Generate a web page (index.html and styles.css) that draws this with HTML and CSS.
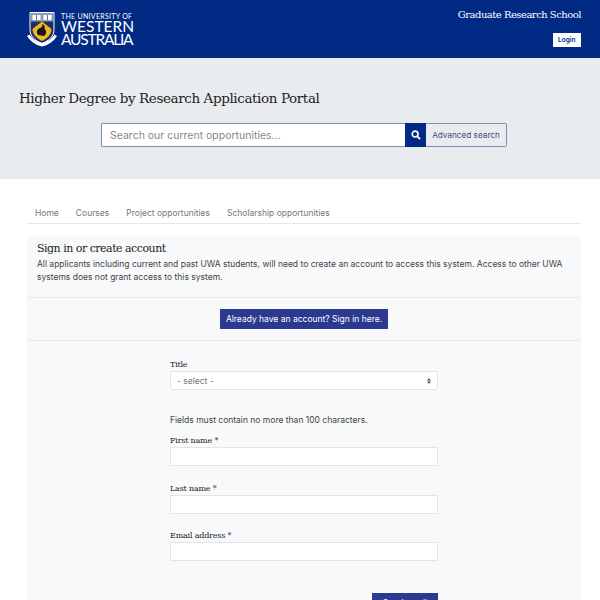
FILE: index.html
```html
<!DOCTYPE html>
<html lang="en">
<head>
  <meta charset="UTF-8">
  <meta name="viewport" content="width=device-width, initial-scale=1.0">
  <title>Higher Degree by Research Application Portal</title>
  <link rel="stylesheet" href="styles.css">
</head>
<body>
  <!-- Header -->
  <div class="topbar">
    <div class="logo">
      <svg class="crest" width="30" height="35" viewBox="0 0 30 35">
        <path d="M3 .5h24v17c0 7-5 11-12 14C8 28.500 3 24.500 3 17.500z" fill="#1c2f66" stroke="#fff" stroke-width="1"/>
        <path d="M3.500 1h23v8.500h-23z" fill="#8f9cb8"/>
        <rect x="5.500" y="3" width="8" height="5" fill="#fff"/>
        <rect x="16.500" y="3" width="8" height="5" fill="#fff"/>
        <path d="M9.500 3v5M20.500 3v5" stroke="#5a6a90" stroke-width="1"/>
        <path d="M15 9.500l9.500 7.500c0 5-3 8.500-9.500 12-6.500-3.500-9.500-7-9.500-12z" fill="#f0b81e"/>
        <path d="M11 23c-2-3-1-6 2-7 2-.5 3-2 2-4 3 1 3 3 2.500 5 2.500 2 2 5.500-.5 7z" fill="#15151a"/>
        <path d="M0 24c3 5 8 9 15 10.500C22 33 27 29 30 24l-2.500-1.500C25 26.500 21 29.500 15 31 9 29.500 5 26.500 2.500 22.500z" fill="#fff"/>
      </svg>
      <div class="wordmark">
        <span class="wordmark-small">THE UNIVERSITY OF</span>
        <span class="wordmark-big">WESTERN</span>
        <span class="wordmark-big wordmark-tight">AUSTRALIA</span>
      </div>
    </div>
    <div class="topbar-right">
      <div class="school">Graduate Research School</div>
      <a class="login" href="#">Login</a>
    </div>
  </div>

  <!-- Search -->
  <div class="hero">
    <h1>Higher Degree by Research Application Portal</h1>
    <div class="search">
      <input class="search-input" type="text" placeholder="Search our current opportunities...">
      <button class="search-btn">
        <svg width="10" height="10" viewBox="0 0 11 11">
          <circle cx="4.500" cy="4.500" r="3.200" fill="none" stroke="#fff" stroke-width="1.800"/>
          <path d="M7 7l3 3" stroke="#fff" stroke-width="2"/>
        </svg>
      </button>
      <a class="advanced" href="#">Advanced search</a>
    </div>
  </div>

  <div class="content">
    <!-- Nav -->
    <div class="nav">
      <a href="#">Home</a>
      <a href="#">Courses</a>
      <a href="#">Project opportunities</a>
      <a href="#">Scholarship opportunities</a>
    </div>

    <!-- Card -->
    <div class="card">
      <div class="card-head">
        <h2>Sign in or create account</h2>
        <p>All applicants including current and past UWA students, will need to create an account to access this system. Access to other UWA systems does not grant access to this system.</p>
      </div>
      <div class="card-signin">
        <a class="btn" href="#">Already have an account? Sign in here.</a>
      </div>
      <div class="card-form">
        <div class="form">
          <label>Title</label>
          <div class="select">
            <span>- select -</span>
            <svg width="4" height="6" viewBox="0 0 5 7">
              <path d="M2.500 0L5 3H0zM2.500 7L0 4h5z" fill="#444"/>
            </svg>
          </div>
          <p class="hint">Fields must contain no more than 100 characters.</p>
          <label>First name *</label>
          <input class="field" type="text">
          <label>Last name *</label>
          <input class="field" type="text">
          <label>Email address *</label>
          <input class="field" type="text">
          <div class="form-actions">
            <a class="btn submit" href="#">Send email</a>
          </div>
        </div>
      </div>
    </div>
  </div>
</body>
</html>
```

FILE: styles.css
```css
/* General Styles */
body {
  font-family: "Inter", "Noto Sans", sans-serif;
  margin: 0;
  background-color: #fff;
  color: #444;
  font-size: 8.500px;
}

/* Header */
.topbar {
  background: #002a84;
  height: 58px;
  box-sizing: border-box;
  padding: 0 19px 0 27px;
  display: flex;
  justify-content: space-between;
}
.logo {
  display: flex;
  align-items: flex-start;
  gap: 4px;
  padding-top: 12px;
}
.wordmark {
  display: flex;
  flex-direction: column;
  font-family: "Lato", sans-serif;
  color: #fff;
}
.wordmark-small {
  font-size: 7px;
  line-height: 8px;
  letter-spacing: 0.3px;
  white-space: nowrap;
}
.wordmark-big {
  font-size: 15.500px;
  line-height: 13px;
}
.wordmark-tight {
  letter-spacing: -1.200px;
}
.topbar-right {
  display: flex;
  flex-direction: column;
  align-items: flex-end;
  padding-top: 8px;
}
.school {
  font-family: "DejaVu Serif", serif;
  font-size: 10px;
  letter-spacing: -0.5px;
  line-height: 14px;
  color: #fff;
}
.login {
  margin-top: 11px;
  background: #fff;
  color: #002a84;
  font-size: 6.500px;
  font-weight: 600;
  line-height: 14px;
  padding: 0 5.500px;
  text-decoration: none;
}

/* Search */
.hero {
  background: #e9ecef;
  height: 121px;
  box-sizing: border-box;
  padding-top: 30px;
}
.hero h1 {
  font-family: "DejaVu Serif", serif;
  font-weight: normal;
  font-size: 13.500px;
  letter-spacing: -0.4px;
  line-height: 20px;
  color: #222;
  margin: 0 0 15px 19px;
}
.search {
  display: flex;
  width: 406px;
  height: 24px;
  margin-left: 101px;
}
.search-input {
  flex: 1;
  box-sizing: border-box;
  border: 1px solid #7f8db8;
  border-right: none;
  border-radius: 2px 0 0 2px;
  padding: 0 8px;
  font-family: inherit;
  font-size: 10.500px;
  outline: none;
}
.search-input::placeholder {
  color: #888;
}
.search-btn {
  width: 21px;
  background: #002a84;
  border: none;
  padding: 0;
  display: flex;
  align-items: center;
  justify-content: center;
}
.advanced {
  box-sizing: border-box;
  width: 81px;
  border: 1px solid #7f8db8;
  border-left: none;
  border-radius: 0 2px 2px 0;
  text-align: center;
  font-size: 8.200px;
  line-height: 22px;
  color: #3c4a8c;
  text-decoration: none;
}

/* Nav */
.content {
  margin: 0 19px 0 27px;
}
.nav {
  display: flex;
  gap: 17px;
  margin-top: 28px;
  padding: 0 8px 4px;
  line-height: 12px;
  border-bottom: 1px solid #e6e6e6;
}
.nav a {
  color: #777;
  text-decoration: none;
}

/* Card */
.card {
  margin-top: 12px;
  background: #f8f9fa;
}
.card-head {
  padding: 5px 10px 0;
  height: 62px;
  box-sizing: border-box;
  border-bottom: 1px solid #e9e9e9;
}
.card-head h2 {
  font-family: "DejaVu Serif", serif;
  font-weight: normal;
  font-size: 11px;
  letter-spacing: -0.5px;
  line-height: 16px;
  color: #222;
  margin: 0;
}
.card-head p {
  margin: 1px 0 0;
  line-height: 12.500px;
}
.card-signin {
  height: 43px;
  box-sizing: border-box;
  display: flex;
  align-items: center;
  justify-content: center;
  border-bottom: 1px solid #e9e9e9;
}
.btn {
  background: #2b3990;
  color: #fff;
  line-height: 20px;
  padding: 0 6px;
  text-decoration: none;
}
.card-form {
  padding: 18px 0 20px 143px;
}
.form {
  width: 268px;
  display: flex;
  flex-direction: column;
}
.form label {
  font-family: "DejaVu Serif", serif;
  font-size: 8px;
  letter-spacing: -0.2px;
  line-height: 12px;
  color: #222;
}
.select {
  height: 19px;
  box-sizing: border-box;
  border: 1px solid #e4e4e4;
  border-radius: 2px;
  background: #fff;
  padding: 0 6px;
  display: flex;
  align-items: center;
  justify-content: space-between;
  color: #777;
}
.hint {
  margin: 24px 0 9px;
  line-height: 12px;
}
.field {
  height: 19px;
  box-sizing: border-box;
  border: 1px solid #e4e4e4;
  background: #fff;
  margin-bottom: 16.500px;
  outline: none;
}
.form-actions {
  display: flex;
  justify-content: flex-end;
  margin-top: 15px;
}
.submit {
  width: 66px;
  box-sizing: border-box;
  text-align: center;
}
```
